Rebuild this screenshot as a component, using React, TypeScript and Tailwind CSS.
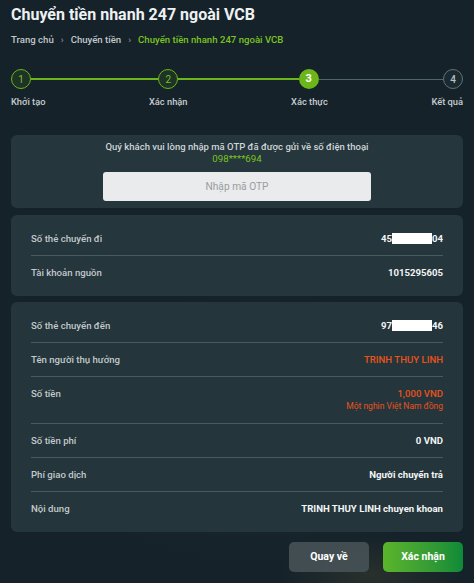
import React from "react";

const steps = [
  { n: 1, label: "Khởi tạo", state: "done" },
  { n: 2, label: "Xác nhận", state: "done" },
  { n: 3, label: "Xác thực", state: "active" },
  { n: 4, label: "Kết quả", state: "todo" },
];

function StepCircle({ n, state }: { n: number; state: string }) {
  if (state === "active")
    return (
      <div className="w-5 h-5 shrink-0 rounded-full bg-[#6cb61a] text-white text-[11px] font-bold flex items-center justify-center">
        {n}
      </div>
    );
  if (state === "done")
    return (
      <div className="w-5 h-5 shrink-0 rounded-full border-[1.5px] border-[#6cb61a] bg-[#1e3325] text-[#79c12a] text-[10px] flex items-center justify-center">
        {n}
      </div>
    );
  return (
    <div className="w-5 h-5 shrink-0 rounded-full border-[1.5px] border-[#5d7478] bg-[#1b2a30] text-[#b9c3c6] text-[10px] font-medium flex items-center justify-center">
      {n}
    </div>
  );
}

function Masked({ a, b }: { a: string; b: string }) {
  return (
    <span className="flex items-center">
      {a}
      <span className="inline-block w-10 h-[11px] bg-white"></span>
      {b}
    </span>
  );
}

function Row({
  label,
  children,
  first,
}: {
  label: string;
  children: React.ReactNode;
  first?: boolean;
}) {
  return (
    <div
      className={
        "flex justify-between items-start py-[10px] leading-[13px] " +
        (first ? "" : "border-t border-[#4a5b60]")
      }
    >
      <span className="text-[#c3c9cc] font-medium">{label}</span>
      <div className="text-right">{children}</div>
    </div>
  );
}

export default function App() {
  return (
    <div
      className="w-[474px] h-[583px] overflow-hidden px-[11px] text-[9.6px] text-white"
      style={{
        fontFamily: "Roboto, 'Noto Sans', sans-serif",
        background:
          "radial-gradient(ellipse 90px 40px at 370px 575px, rgba(110,100,50,0.22), transparent), radial-gradient(ellipse 220px 140px at 260px 430px, rgba(55,75,70,0.18), transparent), #15222a",
      }}
    >
      <h1 className="pt-[4px] text-[16px] font-bold leading-[22px] text-[#eef1f2]">
        Chuyển tiền nhanh 247 ngoài VCB
      </h1>
      <div className="mt-[7px] flex items-center gap-[7px] text-[9.6px] leading-[13px] font-medium text-[#c2c8cb]">
        <span>Trang chủ</span>
        <span className="text-[#8d979b]">›</span>
        <span>Chuyển tiền</span>
        <span className="text-[#8d979b]">›</span>
        <span className="text-[#7cc420]">Chuyển tiền nhanh 247 ngoài VCB</span>
      </div>

      <div className="mt-[23px] flex items-center">
        <StepCircle n={1} state="done" />
        <div className="flex-[128] h-[1.5px] bg-[#6cb61a]"></div>
        <StepCircle n={2} state="done" />
        <div className="flex-[121] h-[1.5px] bg-[#6cb61a]"></div>
        <StepCircle n={3} state="active" />
        <div className="flex-[125] h-px bg-[#4f6569]"></div>
        <StepCircle n={4} state="todo" />
      </div>
      <div className="mt-[6px] flex justify-between text-[9.3px] leading-[13px] font-medium text-[#c6ccce]">
        {steps.map((s) => (
          <span key={s.n}>{s.label}</span>
        ))}
      </div>

      <div className="mt-[27px] rounded-[6px] bg-[#25363c] pt-[6px] pb-[7px] flex flex-col items-center">
        <p className="leading-[12px] text-[9.5px] font-medium text-[#cfd5d8]">
          Quý khách vui lòng nhập mã OTP đã được gửi về số điện thoại
        </p>
        <p className="leading-[12px] text-[#7cc420] text-[9.7px]">098****694</p>
        <div className="mt-[7px] w-[268px] h-[29px] rounded-[3px] bg-[#e9ebec] flex items-center justify-center text-[10.2px] text-[#9a9d9f]">
          Nhập mã OTP
        </div>
      </div>

      <div className="mt-[7px] rounded-[6px] bg-[#25363c] px-5 py-[7px]">
        <Row label="Số thẻ chuyển đi" first>
          <span className="font-bold text-[#f2f4f5]">
            <Masked a="45" b="04" />
          </span>
        </Row>
        <Row label="Tài khoản nguồn">
          <span className="font-bold text-[#f2f4f5]">1015295605</span>
        </Row>
      </div>

      <div className="mt-[6px] rounded-[6px] bg-[#25373c]/95 px-5 py-[7px]">
        <Row label="Số thẻ chuyển đến" first>
          <span className="font-bold text-[#f2f4f5]">
            <Masked a="97" b="46" />
          </span>
        </Row>
        <Row label="Tên người thụ hưởng">
          <span className="font-medium text-[#e9521c]">TRINH THUY LINH</span>
        </Row>
        <Row label="Số tiền">
          <div className="text-[#e9521c] font-medium">1,000 VND</div>
          <div className="text-[#e9521c] text-[8.5px] leading-[13px]">Một nghìn Việt Nam đồng</div>
        </Row>
        <Row label="Số tiền phí">
          <span className="font-bold text-[#f2f4f5]">0 VND</span>
        </Row>
        <Row label="Phí giao dịch">
          <span className="font-bold text-[#f2f4f5]">Người chuyển trả</span>
        </Row>
        <Row label="Nội dung">
          <span className="font-bold text-[#f2f4f5]">TRINH THUY LINH chuyen khoan</span>
        </Row>
      </div>

      <div className="mt-[10px] flex justify-end gap-[14px]">
        <button className="w-20 h-[30px] rounded-[5px] bg-[#465255]/90 text-[10.5px] font-bold text-white">
          Quay về
        </button>
        <button className="w-20 h-[30px] rounded-[5px] bg-gradient-to-r from-[#5ab52a] to-[#0b8a38] text-[10.5px] font-bold text-white">
          Xác nhận
        </button>
      </div>
    </div>
  );
}
